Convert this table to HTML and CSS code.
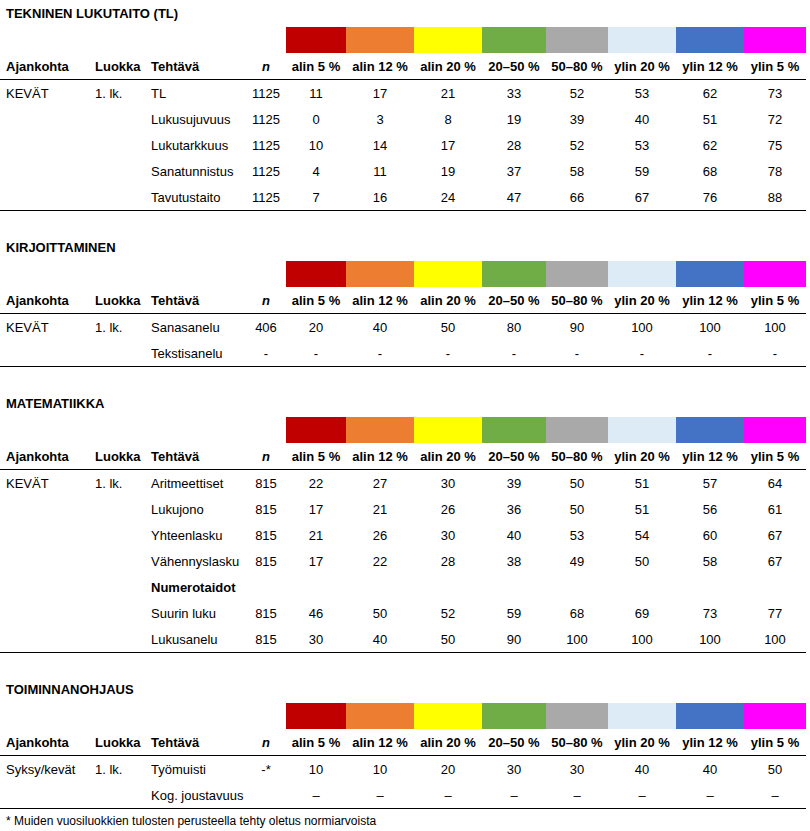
FILE: index.html
```html
<!DOCTYPE html>
<html lang="fi">
<head>
<meta charset="utf-8">
<title>Normiarvot</title>
<link rel="stylesheet" href="styles.css">
</head>
<body>
<div class="page">

<section class="sec">
  <h2 class="title">TEKNINEN LUKUTAITO (TL)</h2>
  <table class="norm">
    <colgroup><col class="c-aj"><col class="c-lu"><col class="c-te"><col class="c-n"><col class="w60"><col class="w68"><col class="w68"><col class="w64"><col class="w62"><col class="w68"><col class="w68"><col class="w62"></colgroup>
    <tr class="bars"><td></td><td></td><td></td><td></td><td class="b1"></td><td class="b2"></td><td class="b3"></td><td class="b4"></td><td class="b5"></td><td class="b6"></td><td class="b7"></td><td class="b8"></td></tr>
    <tr class="head"><th class="l">Ajankohta</th><th class="l">Luokka</th><th class="l">Tehtävä</th><th class="n">n</th><th>alin 5 %</th><th>alin 12 %</th><th>alin 20 %</th><th>20–50 %</th><th>50–80 %</th><th>ylin 20 %</th><th>ylin 12 %</th><th>ylin 5 %</th></tr>
    <tr><td class="l">KEVÄT</td><td class="l">1. lk.</td><td class="l">TL</td><td>1125</td><td>11</td><td>17</td><td>21</td><td>33</td><td>52</td><td>53</td><td>62</td><td>73</td></tr>
    <tr><td></td><td></td><td class="l">Lukusujuvuus</td><td>1125</td><td>0</td><td>3</td><td>8</td><td>19</td><td>39</td><td>40</td><td>51</td><td>72</td></tr>
    <tr><td></td><td></td><td class="l">Lukutarkkuus</td><td>1125</td><td>10</td><td>14</td><td>17</td><td>28</td><td>52</td><td>53</td><td>62</td><td>75</td></tr>
    <tr><td></td><td></td><td class="l">Sanatunnistus</td><td>1125</td><td>4</td><td>11</td><td>19</td><td>37</td><td>58</td><td>59</td><td>68</td><td>78</td></tr>
    <tr class="last"><td></td><td></td><td class="l">Tavutustaito</td><td>1125</td><td>7</td><td>16</td><td>24</td><td>47</td><td>66</td><td>67</td><td>76</td><td>88</td></tr>
  </table>
</section>

<section class="sec">
  <h2 class="title">KIRJOITTAMINEN</h2>
  <table class="norm">
    <colgroup><col class="c-aj"><col class="c-lu"><col class="c-te"><col class="c-n"><col class="w60"><col class="w68"><col class="w68"><col class="w64"><col class="w62"><col class="w68"><col class="w68"><col class="w62"></colgroup>
    <tr class="bars"><td></td><td></td><td></td><td></td><td class="b1"></td><td class="b2"></td><td class="b3"></td><td class="b4"></td><td class="b5"></td><td class="b6"></td><td class="b7"></td><td class="b8"></td></tr>
    <tr class="head"><th class="l">Ajankohta</th><th class="l">Luokka</th><th class="l">Tehtävä</th><th class="n">n</th><th>alin 5 %</th><th>alin 12 %</th><th>alin 20 %</th><th>20–50 %</th><th>50–80 %</th><th>ylin 20 %</th><th>ylin 12 %</th><th>ylin 5 %</th></tr>
    <tr><td class="l">KEVÄT</td><td class="l">1. lk.</td><td class="l">Sanasanelu</td><td>406</td><td>20</td><td>40</td><td>50</td><td>80</td><td>90</td><td>100</td><td>100</td><td>100</td></tr>
    <tr class="last"><td></td><td></td><td class="l">Tekstisanelu</td><td>-</td><td>-</td><td>-</td><td>-</td><td>-</td><td>-</td><td>-</td><td>-</td><td>-</td></tr>
  </table>
</section>

<section class="sec">
  <h2 class="title">MATEMATIIKKA</h2>
  <table class="norm">
    <colgroup><col class="c-aj"><col class="c-lu"><col class="c-te"><col class="c-n"><col class="w60"><col class="w68"><col class="w68"><col class="w64"><col class="w62"><col class="w68"><col class="w68"><col class="w62"></colgroup>
    <tr class="bars"><td></td><td></td><td></td><td></td><td class="b1"></td><td class="b2"></td><td class="b3"></td><td class="b4"></td><td class="b5"></td><td class="b6"></td><td class="b7"></td><td class="b8"></td></tr>
    <tr class="head"><th class="l">Ajankohta</th><th class="l">Luokka</th><th class="l">Tehtävä</th><th class="n">n</th><th>alin 5 %</th><th>alin 12 %</th><th>alin 20 %</th><th>20–50 %</th><th>50–80 %</th><th>ylin 20 %</th><th>ylin 12 %</th><th>ylin 5 %</th></tr>
    <tr><td class="l">KEVÄT</td><td class="l">1. lk.</td><td class="l">Aritmeettiset</td><td>815</td><td>22</td><td>27</td><td>30</td><td>39</td><td>50</td><td>51</td><td>57</td><td>64</td></tr>
    <tr><td></td><td></td><td class="l">Lukujono</td><td>815</td><td>17</td><td>21</td><td>26</td><td>36</td><td>50</td><td>51</td><td>56</td><td>61</td></tr>
    <tr><td></td><td></td><td class="l">Yhteenlasku</td><td>815</td><td>21</td><td>26</td><td>30</td><td>40</td><td>53</td><td>54</td><td>60</td><td>67</td></tr>
    <tr><td></td><td></td><td class="l">Vähennyslasku</td><td>815</td><td>17</td><td>22</td><td>28</td><td>38</td><td>49</td><td>50</td><td>58</td><td>67</td></tr>
    <tr><td></td><td></td><td class="l sub">Numerotaidot</td><td></td><td></td><td></td><td></td><td></td><td></td><td></td><td></td><td></td></tr>
    <tr><td></td><td></td><td class="l">Suurin luku</td><td>815</td><td>46</td><td>50</td><td>52</td><td>59</td><td>68</td><td>69</td><td>73</td><td>77</td></tr>
    <tr class="last"><td></td><td></td><td class="l">Lukusanelu</td><td>815</td><td>30</td><td>40</td><td>50</td><td>90</td><td>100</td><td>100</td><td>100</td><td>100</td></tr>
  </table>
</section>

<section class="sec">
  <h2 class="title">TOIMINNANOHJAUS</h2>
  <table class="norm">
    <colgroup><col class="c-aj"><col class="c-lu"><col class="c-te"><col class="c-n"><col class="w60"><col class="w68"><col class="w68"><col class="w64"><col class="w62"><col class="w68"><col class="w68"><col class="w62"></colgroup>
    <tr class="bars"><td></td><td></td><td></td><td></td><td class="b1"></td><td class="b2"></td><td class="b3"></td><td class="b4"></td><td class="b5"></td><td class="b6"></td><td class="b7"></td><td class="b8"></td></tr>
    <tr class="head"><th class="l">Ajankohta</th><th class="l">Luokka</th><th class="l">Tehtävä</th><th class="n">n</th><th>alin 5 %</th><th>alin 12 %</th><th>alin 20 %</th><th>20–50 %</th><th>50–80 %</th><th>ylin 20 %</th><th>ylin 12 %</th><th>ylin 5 %</th></tr>
    <tr><td class="l">Syksy/kevät</td><td class="l">1. lk.</td><td class="l">Työmuisti</td><td>-*</td><td>10</td><td>10</td><td>20</td><td>30</td><td>30</td><td>40</td><td>40</td><td>50</td></tr>
    <tr class="last"><td></td><td></td><td class="l">Kog. joustavuus</td><td></td><td>–</td><td>–</td><td>–</td><td>–</td><td>–</td><td>–</td><td>–</td><td>–</td></tr>
  </table>
  <p class="note">* Muiden vuosiluokkien tulosten perusteella tehty oletus normiarvoista</p>
</section>

</div>
</body>
</html>
```

FILE: styles.css
```css
html, body {
  margin: 0;
  padding: 0;
  background: #ffffff;
}

body {
  font-family: "Liberation Sans", Arial, sans-serif;
  font-size: 13px;
  color: #000000;
}

.page {
  width: 806px;
  padding-top: 1px;
}

.sec + .sec {
  margin-top: 24px;
}

.title {
  margin: 0;
  height: 26px;
  line-height: 26px;
  padding-left: 6px;
  font-size: 13px;
  font-weight: bold;
}

.norm {
  width: 806px;
  table-layout: fixed;
  border-collapse: collapse;
  border-spacing: 0;
}

.c-aj { width: 89px; }
.c-lu { width: 56px; }
.c-te { width: 101px; }
.c-n  { width: 40px; }
.w60 { width: 60px; }
.w62 { width: 62px; }
.w64 { width: 64px; }
.w68 { width: 68px; }

.norm td,
.norm th {
  padding: 0;
  height: 26px;
  text-align: center;
  vertical-align: middle;
  white-space: nowrap;
  font-weight: normal;
  line-height: 15px;
}

.norm .l {
  text-align: left;
  padding-left: 6px;
}

.head th {
  font-weight: bold;
  border-bottom: 1px solid #000000;
}

.head th.n {
  font-style: italic;
}

.bars td {
  height: 26px;
}

.b1 { background: #c00000; }
.b2 { background: #ed7d31; }
.b3 { background: #ffff00; }
.b4 { background: #70ad47; }
.b5 { background: #a9a9a9; }
.b6 { background: #ddebf7; }
.b7 { background: #4472c4; }
.b8 { background: #ff00ff; }

.last td {
  border-bottom: 1px solid #000000;
}

.norm .sub {
  font-weight: bold;
}

.note {
  margin: 0;
  height: 24px;
  line-height: 24px;
  padding-left: 6px;
  font-size: 12px;
}
```
